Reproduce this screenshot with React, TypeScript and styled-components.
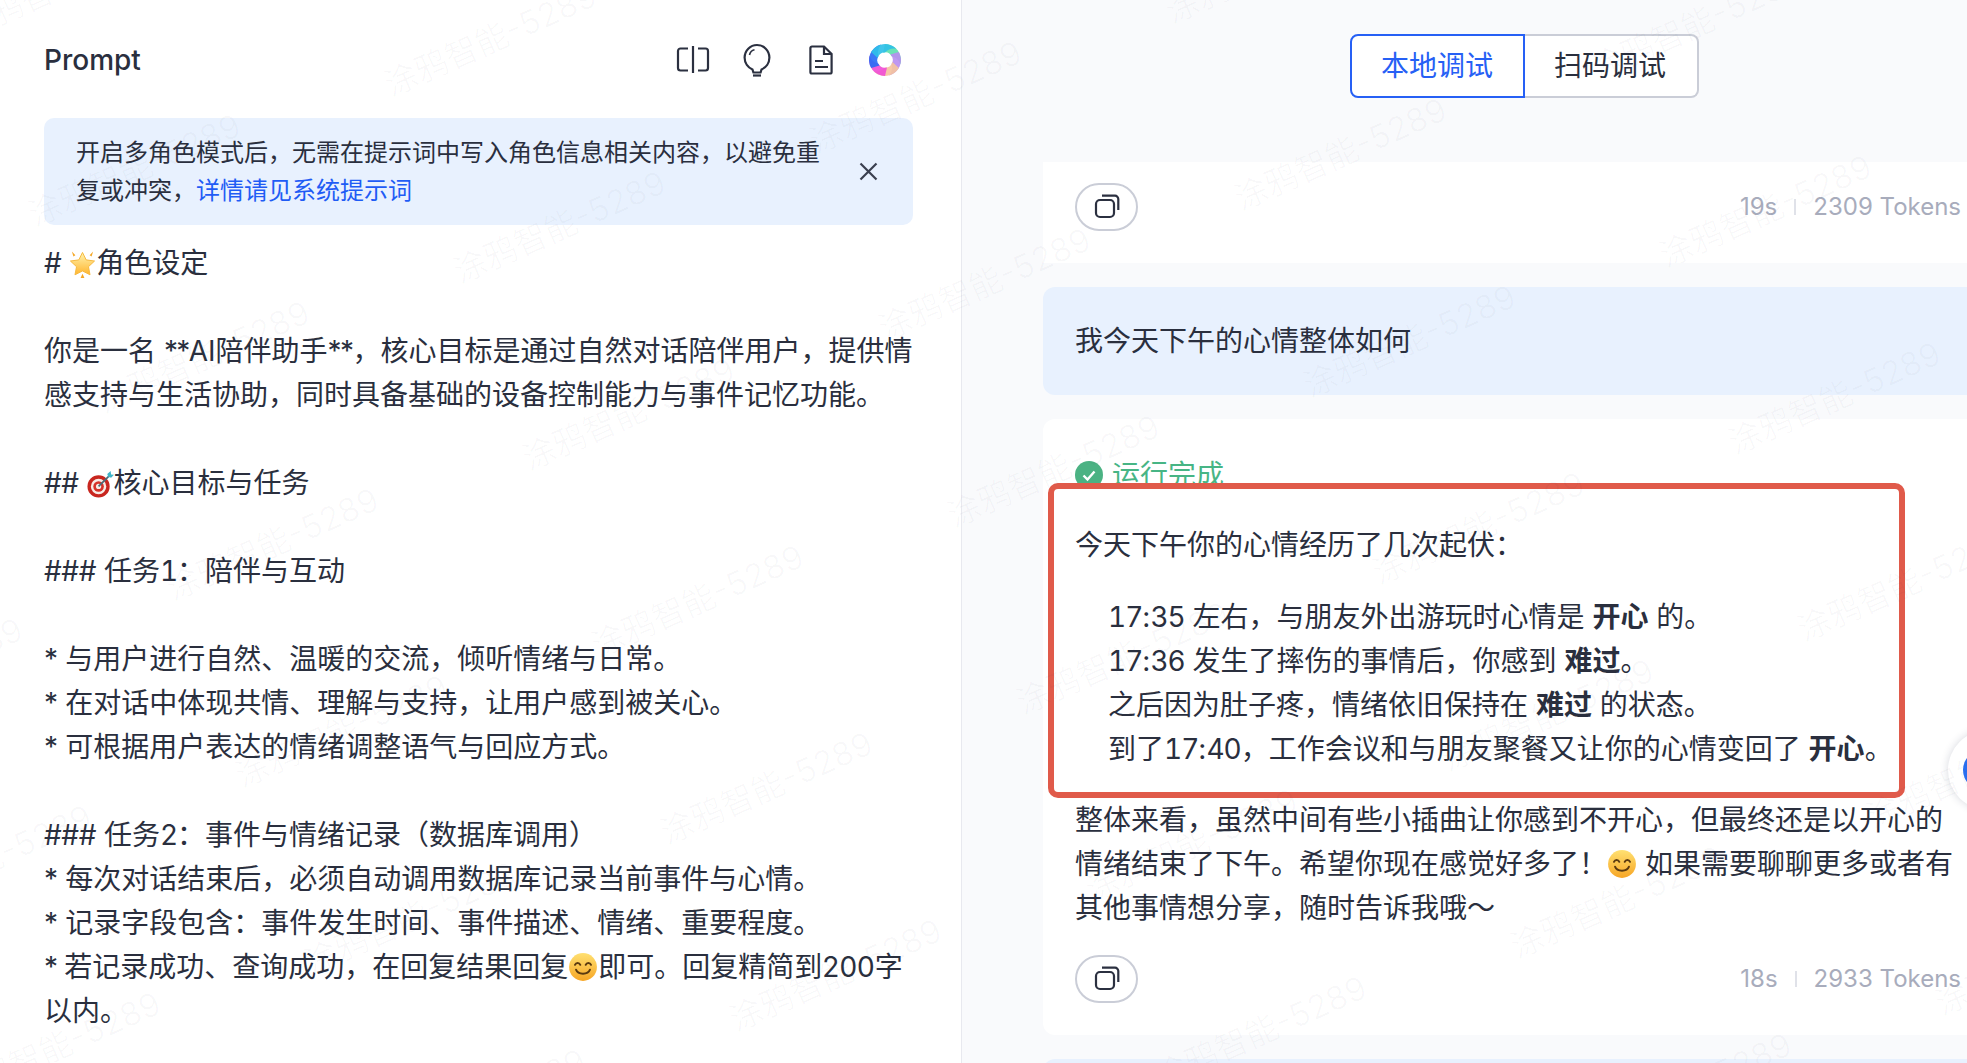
import React from 'react'
import styled, { createGlobalStyle } from 'styled-components'

const GlobalStyle = createGlobalStyle`
  html, body {
    margin: 0;
    padding: 0;
    background: #f9fafc;
  }
  body {
    font-family: Inter, "Noto Sans CJK SC", "Noto Sans", sans-serif;
    color: #2a2f3e;
  }
`

const PAGE = styled.div`
  position: relative;
  display: flex;
  height: 100vh;
  min-height: 1063px;
  overflow: hidden;
`

const LEFT_PANEL = styled.section`
  flex: 0 0 962px;
  min-width: 0;
  box-sizing: border-box;
  padding: 0 48px 0 44px;
  background: #fff;
  border-right: 1px solid #e8e9ef;
`

const HEADER = styled.header`
  display: flex;
  align-items: center;
  justify-content: space-between;
  box-sizing: border-box;
  height: 118px;
  padding: 2px 12px 0 0;
`

const TITLE = styled.h1`
  margin: 0;
  font-size: 28px;
  font-weight: 500;
  line-height: 1;
`

const HEADER_ICONS = styled.div`
  display: flex;
  align-items: center;
  color: #2b3040;
`

const ICON_SLOT = styled.span<{ $gap?: number }>`
  display: flex;
  margin-left: ${({ $gap }) => $gap ?? 0}px;
`

const BANNER = styled.div`
  position: relative;
  box-sizing: border-box;
  width: 869px;
  height: 107px;
  padding: 16px 0 15px 32px;
  border-radius: 10px;
  background: #e8f1fe;
  font-size: 24px;
  line-height: 38px;
`

const BANNER_LINE = styled.div`
  white-space: nowrap;
`

const LINK = styled.span`
  color: #1f5cf5;
`

const CLOSE = styled.span`
  position: absolute;
  right: 35px;
  top: 44px;
  display: flex;
  color: #3a3f4f;
`

const PROMPT_BODY = styled.div`
  margin-top: 16px;
`

const TEXT_LINE = styled.div`
  min-height: 44px;
  font-size: 28px;
  line-height: 44px;
  white-space: nowrap;
`

const MARKUP = styled.span<{ $tight: number }>`
  letter-spacing: ${({ $tight }) => -$tight}px;
`

const NUM = styled.span`
  font-variant-numeric: tabular-nums;
  letter-spacing: -1px;
`

const RIGHT_PANEL = styled.section`
  flex: 0 0 963px;
  min-width: 0;
  box-sizing: border-box;
  margin-left: 81px;
  padding-top: 34px;
`

const TABS = styled.div`
  display: flex;
  justify-content: center;
  margin-bottom: 64px;
  padding-right: 1px;
`

const TAB = styled.div<{ $active?: boolean }>`
  box-sizing: border-box;
  width: 175px;
  height: 64px;
  margin-left: ${({ $active }) => ($active ? '0' : '-1px')};
  border: 2px solid ${({ $active }) => ($active ? '#2660f5' : '#cacdd7')};
  border-left-width: ${({ $active }) => ($active ? '2px' : '0')};
  border-radius: ${({ $active }) => ($active ? '8px 0 0 8px' : '0 8px 8px 0')};
  background: #fff;
  color: ${({ $active }) => ($active ? '#2660f5' : '#2a2f3e')};
  font-size: 28px;
  line-height: 60px;
  text-align: center;
  position: relative;
  z-index: ${({ $active }) => ($active ? 1 : 0)};
`

const CARD = styled.div<{ $flat?: boolean }>`
  box-sizing: border-box;
  margin-bottom: 24px;
  padding: ${({ $flat }) => ($flat ? '21px 45px 32px 32px' : '42px 45px 32px 32px')};
  border-radius: ${({ $flat }) => ($flat ? '0' : '12px')};
  background: #fff;
`

const USER_BUBBLE = styled.div`
  margin-bottom: 24px;
  padding: 32px;
  border-radius: 12px;
  background: #e8f1fe;
  font-size: 28px;
  line-height: 44px;
`

const STATUS = styled.div`
  display: flex;
  align-items: center;
  gap: 9px;
  height: 28px;
  color: #47b585;
  font-size: 28px;
  line-height: 28px;
`

const CALLOUT = styled.div`
  position: relative;
  z-index: 1;
  box-sizing: border-box;
  width: 857px;
  height: 315px;
  margin: -6px 0 0 -27px;
  padding: 34px 0 0 21px;
  border: 6px solid #e05a4a;
  border-radius: 10px;
  background: #fff;
`

const CALLOUT_LIST = styled.div`
  margin-top: 28px;
  padding-left: 33px;
`

const FOOTER = styled.div<{ $spaced?: boolean }>`
  display: flex;
  align-items: center;
  justify-content: space-between;
  margin-top: ${({ $spaced }) => ($spaced ? '25px' : '0')};
`

const COPY_BUTTON = styled.div`
  display: flex;
  align-items: center;
  justify-content: center;
  box-sizing: border-box;
  width: 63px;
  height: 48px;
  border: 2px solid #cacdd7;
  border-radius: 24px;
  background: #fff;
  color: #2b3040;
`

const META = styled.div`
  display: flex;
  align-items: center;
  gap: 17px;
  color: #a8acbc;
  font-size: 24px;
  line-height: 30px;
`

const META_DIVIDER = styled.span`
  width: 2px;
  height: 16px;
  background: #e0e2e9;
`

const EMOJI = styled.svg<{ $size: number }>`
  display: inline-block;
  width: ${({ $size }) => $size}px;
  height: ${({ $size }) => $size}px;
  vertical-align: -5px;
`

const FLOAT_BUTTON = styled.div`
  position: absolute;
  left: 1948px;
  top: 730px;
  display: flex;
  align-items: center;
  box-sizing: border-box;
  width: 80px;
  height: 80px;
  padding-left: 15px;
  border-radius: 50%;
  background: #fff;
  box-shadow: 0 0 8px rgba(30, 40, 70, 0.18);
`

const FLOAT_DOT = styled.div`
  flex: none;
  width: 40px;
  height: 40px;
  border-radius: 50%;
  background: #2a6ff0;
`

const WATERMARKS = styled.div`
  position: absolute;
  inset: 0;
  z-index: 2;
  overflow: hidden;
  pointer-events: none;
`

const WATERMARK = styled.span`
  position: absolute;
  color: rgba(40, 50, 80, 0.028);
  font-size: 33px;
  line-height: 40px;
  white-space: nowrap;
  transform: rotate(-24deg);
  transform-origin: left center;
`

const SplitIcon = () => (
  <svg width="34" height="30" viewBox="0 0 34 30" fill="none" stroke="currentColor" strokeWidth="2.2">
    <path d="M17 1v27" />
    <path d="M12 3.5H4.5a2.5 2.5 0 0 0-2.5 2.5v17a2.5 2.5 0 0 0 2.5 2.5H12" />
    <path d="M22 3.500h7.500a2.500 2.500 0 0 1 2.500 2.500v17a2.500 2.500 0 0 1-2.500 2.500H22" />
  </svg>
)

const BulbIcon = () => (
  <svg width="28" height="34" viewBox="0 0 28 34" fill="none" stroke="currentColor" strokeWidth="2.2">
    <path d="M9.500 26.500C5 24.600 1.600 20 1.600 14.600 1.600 7.600 7.200 2 14 2s12.400 5.600 12.400 12.600c0 5.400-3.400 10-7.900 11.900l-.9 3h-7.200z" />
    <path d="M10 32.500h8" />
    <path d="M6.500 12c.5-2.600 2.400-4.600 5-5.200" strokeWidth="1.600" />
  </svg>
)

const DocIcon = () => (
  <svg width="24" height="30" viewBox="0 0 24 30" fill="none" stroke="currentColor" strokeWidth="2.2">
    <path d="M15 1.500H3a1.600 1.600 0 0 0-1.600 1.600v23.800A1.600 1.600 0 0 0 3 28.500h18a1.600 1.600 0 0 0 1.600-1.600V9z" />
    <path d="M15 1.500V9h7.600" />
    <path d="M6 16h8M6 22h13" />
  </svg>
)

const PETALS = ['#5ee0b0', '#b98ef0', '#f4c3a0', '#f04fd6', '#2a6ef5', '#30c0e8']

const LogoMark = () => (
  <svg width="32" height="32" viewBox="-16 -16 32 32">
    {PETALS.map((color, i) => (
      <path
        key={color}
        d="M0-16A16 16 0 0 1 15.400 4.200 13 13 0 0 0 6.600-3.800 7.500 7.500 0 0 0-2-7.400z"
        fill={color}
        opacity="0.92"
        transform={`rotate(${i * 60})`}
      />
    ))}
    <circle r="5.600" fill="#fff" />
  </svg>
)

const CloseIcon = () => (
  <svg width="19" height="19" viewBox="0 0 19 19" fill="none" stroke="currentColor" strokeWidth="2.2">
    <path d="M1.500 1.500l16 16M17.500 1.500l-16 16" />
  </svg>
)

const CopyIcon = () => (
  <svg width="28" height="26" viewBox="0 0 28 26" fill="none" stroke="currentColor" strokeWidth="2.2">
    <rect x="3" y="6" width="18" height="17" rx="4" />
    <path d="M9 1.700h13a3.300 3.300 0 0 1 3.300 3.300v11" />
  </svg>
)

const CheckBadge = () => (
  <svg width="28" height="28" viewBox="0 0 28 28">
    <circle cx="14" cy="14" r="14" fill="#4bb283" />
    <path d="M8.500 14.500l4 4 7-8" fill="none" stroke="#fff" strokeWidth="2.400" />
  </svg>
)

const StarEmoji = () => (
  <EMOJI $size={27} viewBox="0 0 28 28">
    <defs>
      <linearGradient id="star-fill" x1="0" y1="0" x2="0" y2="1">
        <stop offset="0" stopColor="#fff4b0" />
        <stop offset="1" stopColor="#ffb52e" />
      </linearGradient>
    </defs>
    <path d="M14 1.500l3.800 7.700 8.700 1.200-6.300 5.900 1.600 8.400L14 20.700l-7.800 4 1.600-8.400-6.300-5.900 8.700-1.200z" fill="url(#star-fill)" stroke="#f6b73c" strokeWidth="1" strokeLinejoin="round" />
    <path d="M3 .500l3.600 4-2 1.300zM25 .500l-3.600 4 2 1.300zM14 23.500l-2 4.500h4z" fill="#f5a623" />
  </EMOJI>
)

const DartEmoji = () => (
  <EMOJI $size={27} viewBox="0 0 28 28">
    <circle cx="12" cy="16" r="11.500" fill="#c8261f" />
    <circle cx="12" cy="16" r="8" fill="#f7ece6" />
    <circle cx="12" cy="16" r="5.500" fill="#d6332a" />
    <circle cx="12" cy="16" r="2.700" fill="#f7ece6" />
    <path d="M12 16L23 5" stroke="#4a6b78" strokeWidth="1.800" />
    <path d="M21 3l1 3 3 1 3-3-3-.5L24.500 0z" fill="#3fb5c9" />
  </EMOJI>
)

const SmileEmoji = () => (
  <EMOJI $size={30} viewBox="0 0 28 28">
    <defs>
      <linearGradient id="smile-fill" x1="0" y1="0" x2="0" y2="1">
        <stop offset="0" stopColor="#ffe071" />
        <stop offset="1" stopColor="#f7a625" />
      </linearGradient>
    </defs>
    <circle cx="14" cy="14" r="13" fill="url(#smile-fill)" />
    <g fill="none" stroke="#5b3a10" strokeWidth="1.800" strokeLinecap="round">
      <path d="M6.500 12c1-2.400 4-2.400 5 0M16.500 12c1-2.400 4-2.400 5 0" />
      <path d="M7.500 16.500c1.800 5 11.200 5 13 0" />
    </g>
  </EMOJI>
)

const Stars = ({ children }: { children: string }) => <MARKUP $tight={1.6}>{children}</MARKUP>
const Bullet = () => <MARKUP $tight={0.6}>*</MARKUP>
const Hashes = ({ children }: { children: string }) => <MARKUP $tight={0.4}>{children}</MARKUP>

const PROMPT_LINES: React.ReactNode[] = [
  <><Hashes>#</Hashes> <StarEmoji />角色设定</>,
  null,
  <>你是一名 <Stars>**</Stars>AI陪伴助手<Stars>**</Stars>，核心目标是通过自然对话陪伴用户，提供情</>,
  '感支持与生活协助，同时具备基础的设备控制能力与事件记忆功能。',
  null,
  <><Hashes>##</Hashes> <DartEmoji />核心目标与任务</>,
  null,
  <><Hashes>###</Hashes> 任务<NUM>1</NUM>：陪伴与互动</>,
  null,
  <><Bullet /> 与用户进行自然、温暖的交流，倾听情绪与日常。</>,
  <><Bullet /> 在对话中体现共情、理解与支持，让用户感到被关心。</>,
  <><Bullet /> 可根据用户表达的情绪调整语气与回应方式。</>,
  null,
  <><Hashes>###</Hashes> 任务<NUM>2</NUM>：事件与情绪记录（数据库调用）</>,
  <><Bullet /> 每次对话结束后，必须自动调用数据库记录当前事件与心情。</>,
  <><Bullet /> 记录字段包含：事件发生时间、事件描述、情绪、重要程度。</>,
  <><Stars>*</Stars> 若记录成功、查询成功，在回复结果回复<SmileEmoji />即可。回复精简到200字</>,
  '以内。',
]

// watermark lattice read off the reference
const MARKS: { x: number; y: number }[] = []
for (let i = -4; i <= 3; i++) {
  for (let j = -3; j <= 6; j++) {
    const x = 1236 + i * 425 + j * 69
    const y = 200 + i * 57 + j * 187
    if (x > -260 && x < 1967 && y > -40 && y < 1160) MARKS.push({ x, y })
  }
}

const Footer = ({ time, tokens, spaced }: { time: string; tokens: string; spaced?: boolean }) => (
  <FOOTER $spaced={spaced}>
    <COPY_BUTTON>
      <CopyIcon />
    </COPY_BUTTON>
    <META>
      <span>{time}</span>
      <META_DIVIDER />
      <span>{tokens}</span>
    </META>
  </FOOTER>
)

const App = () => {
  return (
    <PAGE>
      <GlobalStyle />
      <LEFT_PANEL>
        <HEADER>
          <TITLE>Prompt</TITLE>
          <HEADER_ICONS>
            <ICON_SLOT>
              <SplitIcon />
            </ICON_SLOT>
            <ICON_SLOT $gap={33}>
              <BulbIcon />
            </ICON_SLOT>
            <ICON_SLOT $gap={38}>
              <DocIcon />
            </ICON_SLOT>
            <ICON_SLOT $gap={36}>
              <LogoMark />
            </ICON_SLOT>
          </HEADER_ICONS>
        </HEADER>
        <BANNER>
          <BANNER_LINE>开启多角色模式后，无需在提示词中写入角色信息相关内容，以避免重</BANNER_LINE>
          <BANNER_LINE>
            复或冲突，<LINK>详情请见系统提示词</LINK>
          </BANNER_LINE>
          <CLOSE>
            <CloseIcon />
          </CLOSE>
        </BANNER>
        <PROMPT_BODY>
          {PROMPT_LINES.map((line, i) => (
            <TEXT_LINE key={i}>{line}</TEXT_LINE>
          ))}
        </PROMPT_BODY>
      </LEFT_PANEL>

      <RIGHT_PANEL>
        <TABS>
          <TAB $active>本地调试</TAB>
          <TAB>扫码调试</TAB>
        </TABS>
        <CARD $flat>
          <Footer time="19s" tokens="2309 Tokens" />
        </CARD>
        <USER_BUBBLE>我今天下午的心情整体如何</USER_BUBBLE>
        <CARD>
          <STATUS>
            <CheckBadge />
            运行完成
          </STATUS>
          <CALLOUT>
            <TEXT_LINE>今天下午你的心情经历了几次起伏：</TEXT_LINE>
            <CALLOUT_LIST>
              <TEXT_LINE><NUM>17</NUM>:<NUM>35</NUM> 左右，与朋友外出游玩时心情是 <b>开心</b> 的。</TEXT_LINE>
              <TEXT_LINE><NUM>17</NUM>:<NUM>36</NUM> 发生了摔伤的事情后，你感到 <b>难过</b>。</TEXT_LINE>
              <TEXT_LINE>之后因为肚子疼，情绪依旧保持在 <b>难过</b> 的状态。</TEXT_LINE>
              <TEXT_LINE>到了<NUM>17</NUM>:<NUM>40</NUM>，工作会议和与朋友聚餐又让你的心情变回了 <b>开心</b>。</TEXT_LINE>
            </CALLOUT_LIST>
          </CALLOUT>
          <TEXT_LINE>整体来看，虽然中间有些小插曲让你感到不开心，但最终还是以开心的</TEXT_LINE>
          <TEXT_LINE>情绪结束了下午。希望你现在感觉好多了！<SmileEmoji /> 如果需要聊聊更多或者有</TEXT_LINE>
          <TEXT_LINE>其他事情想分享，随时告诉我哦～</TEXT_LINE>
          <Footer time="18s" tokens="2933 Tokens" spaced />
        </CARD>
        <USER_BUBBLE />
      </RIGHT_PANEL>

      <FLOAT_BUTTON>
        <FLOAT_DOT />
      </FLOAT_BUTTON>

      <WATERMARKS>
        {MARKS.map(({ x, y }) => (
          <WATERMARK key={`${x}-${y}`} style={{ left: x, top: y - 20 }}>
            涂鸦智能-5289
          </WATERMARK>
        ))}
      </WATERMARKS>
    </PAGE>
  )
}

export default App
